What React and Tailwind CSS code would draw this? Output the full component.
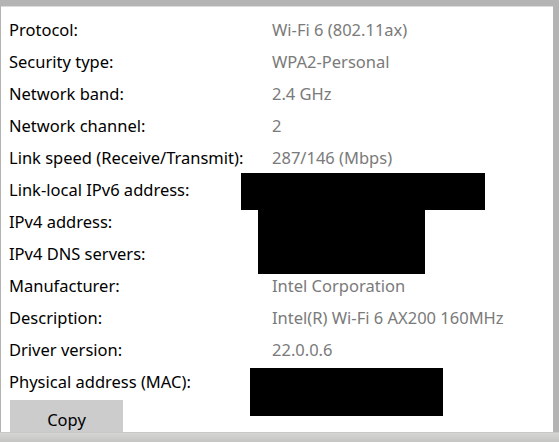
const rows = [
  ['Protocol:', 'Wi-Fi 6 (802.11ax)'],
  ['Security type:', 'WPA2-Personal'],
  ['Network band:', '2.4 GHz'],
  ['Network channel:', '2'],
  ['Link speed (Receive/Transmit):', '287/146 (Mbps)'],
  ['Link-local IPv6 address:', ''],
  ['IPv4 address:', ''],
  ['IPv4 DNS servers:', ''],
  ['Manufacturer:', 'Intel Corporation'],
  ['Description:', 'Intel(R) Wi-Fi 6 AX200 160MHz'],
  ['Driver version:', '22.0.0.6'],
  ['Physical address (MAC):', ''],
]

export default function App() {
  return (
    <div className="w-[559px] h-[442px] bg-[#b4b4b4] flex flex-col overflow-hidden font-['Noto_Sans',sans-serif]">
      <div className="h-[6px] shrink-0" />
      <div className="h-px shrink-0 bg-[#dcdcdc] mr-[6px] ml-px" />
      <div className="flex flex-1 min-h-0">
        <div className="w-px bg-[#b4b4b4]" />
        {/* properties panel */}
        <div className="relative flex-1 bg-white overflow-hidden pt-[7px]">
          {rows.map(([label, value]) => (
            <div key={label} className="flex items-center h-[32px] text-[16.5px] leading-none">
              <div className="w-[271px] pl-[8px] text-black">{label}</div>
              <div className="text-[#7a7a7a]">{value}</div>
            </div>
          ))}
          <button className="ml-[9px] mt-[2px] w-[113px] h-[34px] bg-[#cccccc] text-[16.5px] leading-none text-black pt-[6px]">
            Copy
          </button>

          {/* redactions */}
          <div className="absolute left-[240px] top-[166px] w-[244px] h-[37px] bg-black" />
          <div className="absolute left-[257px] top-[203px] w-[167px] h-[64px] bg-black" />
          <div className="absolute left-[249px] top-[361px] w-[193px] h-[48px] bg-black" />
        </div>
        <div className="w-[6px] bg-[#b4b4b4]" />
      </div>
      <div className="h-[10px] shrink-0 border-t border-[#c8c8c8] bg-gradient-to-b from-[#d6d6d4] to-[#c4c4c2]" />
    </div>
  )
}
